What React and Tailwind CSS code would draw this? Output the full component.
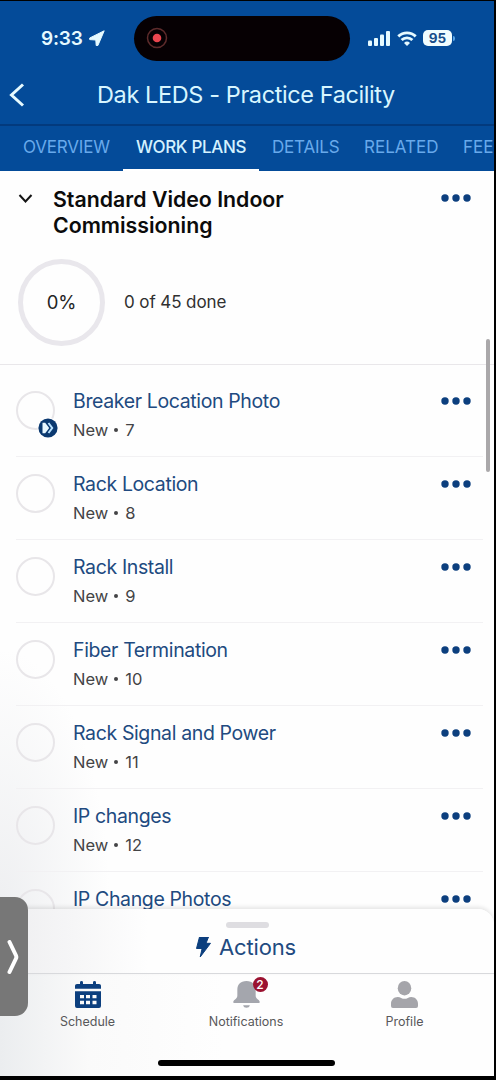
const tasks = [
  { name: 'Breaker Location Photo', number: 7, current: true },
  { name: 'Rack Location', number: 8 },
  { name: 'Rack Install', number: 9 },
  { name: 'Fiber Termination', number: 10 },
  { name: 'Rack Signal and Power', number: 11 },
  { name: 'IP changes', number: 12 },
  { name: 'IP Change Photos' },
];

function StatusBar() {
  return (
    <div className="flex h-[74px] items-center pl-[41px] text-[#e6faff]">
      <span className="w-[45px] pt-[2px] text-[19px] font-semibold tracking-[-0.200px] whitespace-nowrap">9:33</span>
      <svg className="ml-[3px] h-4 w-4" viewBox="0 0 16 16" fill="currentColor" stroke="currentColor" strokeWidth="1" strokeLinejoin="round">
        <path d="M15.200.8.700 8v1.600l6.100.4.400 5.500h1.700Z" />
      </svg>
      <div className="ml-[29px] flex h-[45px] w-[216px] items-center rounded-full bg-[#060003] pl-3">
        <svg className="h-[22px] w-[22px]" viewBox="0 0 22 22">
          <circle cx="11" cy="11" r="9.500" fill="none" stroke="#5e2b2c" strokeWidth="1.500" />
          <circle cx="11" cy="11" r="4.300" fill="#e9454f" />
        </svg>
      </div>
      <svg className="ml-[17px] h-[15px] w-6" viewBox="0 0 24 15" fill="currentColor">
        <rect x="1" y="9.500" width="4" height="5.500" rx="1" />
        <rect x="7" y="7" width="4" height="8" rx="1" />
        <rect x="13" y="3.500" width="4" height="11.500" rx="1" />
        <rect x="19" y="0" width="4" height="15" rx="1" />
      </svg>
      <svg className="ml-[6px] h-[15px] w-5" viewBox="0 0 20 15" fill="none" stroke="currentColor" strokeWidth="2.900">
        <path d="M1.300 5.400a12.500 12.500 0 0 1 17.400 0" />
        <path d="M4.600 9a7.800 7.800 0 0 1 10.800 0" />
        <path d="m10 15-3-3.100a4.500 4.500 0 0 1 6 0Z" fill="currentColor" stroke="none" />
      </svg>
      <div className="ml-[6px] flex h-4 w-[29px] items-center justify-center rounded-[5px] bg-[#f1fdff] text-[13.500px] font-bold text-[#174d8a]">95</div>
      <div className="ml-px h-[5px] w-[2px] rounded-r-full bg-[#56a4e8]" />
    </div>
  );
}

function Tabs() {
  return (
    <div className="flex h-[47px] items-center overflow-hidden border-t-2 border-[#033a7d] text-[17px] whitespace-nowrap text-[#68a9eb]">
      <div className="ml-[23px] w-[100px] shrink-0 pb-[2px] tracking-[-0.200px]">OVERVIEW</div>
      <div className="relative flex h-full w-[136px] shrink-0 items-center justify-center pb-[2px] font-medium tracking-[-0.350px] text-[#d4f2ff]">
        WORK PLANS
        <span className="absolute inset-x-0 bottom-0 h-[2px] bg-white" />
      </div>
      <div className="ml-[13px] w-[92px] shrink-0 pb-[2px] tracking-[-0.200px]">DETAILS</div>
      <div className="w-[99px] shrink-0 pb-[2px]">RELATED</div>
      <div className="shrink-0 pb-[2px]">FEE</div>
    </div>
  );
}

function MoreDots() {
  return (
    <svg className="h-2 w-[30px] shrink-0" viewBox="0 0 30 8" fill="#0c3f7e">
      <circle cx="4" cy="4" r="3.700" />
      <circle cx="15" cy="4" r="3.700" />
      <circle cx="26" cy="4" r="3.700" />
    </svg>
  );
}

function TaskRow({ task }) {
  return (
    <div className="ml-4 flex h-[83px] w-[467px] shrink-0 border-b border-[#f2f1f3]">
      <div className="w-[57px] shrink-0 pt-[17px]">
        <div className="relative h-[39px] w-[39px] rounded-full border-2 border-[#e8e6e9]">
          {task.current && (
            <svg className="absolute top-[24px] left-[19px] h-[22px] w-[22px]" viewBox="0 0 22 22">
              <circle cx="11" cy="11" r="10.500" fill="white" />
              <circle cx="11" cy="11" r="9.600" fill="#0b3970" />
              <path d="M5.500 5.700h2.700l4 5.300-4 5.300H5.500Z" fill="#e8f8ff" />
              <path d="m11.500 6 3.700 5-3.700 5" fill="none" stroke="#b9e2ff" strokeWidth="2" />
            </svg>
          )}
        </div>
      </div>
      <div className="flex flex-1 flex-col pt-[13px]">
        <div className="flex h-[28px] items-center justify-between pr-[12px]">
          <span className="pt-[2px] text-[19.500px] tracking-[-0.370px] whitespace-nowrap text-[#214a80]">{task.name}</span>
          <MoreDots />
        </div>
        {task.number && (
          <div className="flex h-[30px] items-center text-[16.500px] text-[#444446]">
            <span>New</span>
            <span className="ml-[6px] h-1 w-1 rounded-full bg-[#444446]" />
            <span className="ml-[7px]">{task.number}</span>
          </div>
        )}
      </div>
    </div>
  );
}

export default function App() {
  return (
    <div className="h-[1080px] w-[496px] overflow-hidden bg-black pt-px font-['Inter','Liberation_Sans',sans-serif]">
      <div className="relative flex h-[1075px] w-[494px] flex-col overflow-hidden bg-[#fefefe]">
        <header className="h-[170px] shrink-0 bg-[#044b99]">
          <StatusBar />
          <div className="relative flex h-[49px] items-center justify-center pb-[9px]">
            <svg className="absolute top-[8px] left-2 h-6 w-[18px]" viewBox="0 0 18 24" fill="none" stroke="#e6faff" strokeWidth="3">
              <path d="M15 1.500 3.500 12 15 22.500" />
            </svg>
            <h1 className="ml-[-2px] text-[23.500px] tracking-[-0.400px] whitespace-nowrap text-[#d8f6ff]">Dak LEDS - Practice Facility</h1>
          </div>
          <Tabs />
        </header>

        <section className="h-[194px] shrink-0 border-b border-[#e9e7ea]">
          <div className="flex pt-[15px] pr-[23px]">
            <svg className="mt-2 ml-[18px] h-[10px] w-[15px]" viewBox="0 0 15 10" fill="none" stroke="#151515" strokeWidth="2">
              <path d="m1.500 1 6 6.500 6-6.500" />
            </svg>
            <h2 className="ml-5 flex-1 text-[21.300px] leading-[26px] font-semibold text-[#0b0b0b]">Standard Video Indoor<br />Commissioning</h2>
            <div className="flex h-[24px] items-center"><MoreDots /></div>
          </div>
          <div className="mt-[21px] ml-[18px] flex items-center">
            <div className="flex h-[87px] w-[87px] items-center justify-center rounded-full border-[5px] border-[#e9e7ec] text-[18.500px] tracking-[-0.200px] text-[#242424]">0%</div>
            <span className="ml-[19px] text-[17px] tracking-[-0.100px] text-[#303030]">0 of 45 done</span>
          </div>
        </section>

        <main className="flex h-[544px] shrink-0 flex-col overflow-hidden bg-[radial-gradient(ellipse_110px_260px_at_0%_100%,#eeeff1,#fefefe)] pt-[9px]">
          {tasks.map((task) => <TaskRow key={task.name} task={task} />)}
        </main>

        <div className="relative flex h-[65px] shrink-0 flex-col items-center rounded-tr-[16px] border-b border-[#d8d9dc] bg-linear-to-r from-[#eeeef0] to-[#fefefe] to-30% shadow-[0_-2px_4px_rgba(0,0,0,0.1)]">
          <div className="mt-[13px] h-[6px] w-[43px] shrink-0 rounded-full bg-[#dedde1]" />
          <div className="mt-1 mr-[2px] flex h-[30px] items-center gap-[8px] text-[22px] tracking-[-0.150px] text-[#214a80]">
            <svg className="h-5 w-[15px]" viewBox="0 0 15 20" fill="#0c3f7e">
              <path d="M3.500 0h9L10 6.300h4.500L4.200 20l1.900-8.500H.500Z" stroke="#0c3f7e" strokeLinejoin="round" />
            </svg>
            <span>Actions</span>
          </div>
        </div>

        <nav className="flex flex-1 bg-linear-to-r from-[#ebedef] via-[#fafafa] via-18% to-[#fefefe] to-45% pl-2 text-[12.500px] text-[#58585a]">
          <div className="flex w-[159px] flex-col items-center pt-[7px]">
            <svg className="h-[27px] w-[26px]" viewBox="0 0 26 28" preserveAspectRatio="none" fill="#0c3f7e">
              <path d="M2 3h3V1.500a1.500 1.500 0 0 1 3 0V3h10V1.500a1.500 1.500 0 0 1 3 0V3h3q2 0 2 2v3H0V5q0-2 2-2Z" />
              <path fillRule="evenodd" d="M0 10.500h26V26q0 2-2 2H2q-2 0-2-2Zm5 4V18h4v-3.500Zm6 0V18h4v-3.500Zm6.500 0V18h4v-3.500ZM5 20.500V24h4v-3.500Zm6 0V24h4v-3.500Zm6.500 0V24h4v-3.500Z" />
            </svg>
            <span className="mt-[5px]">Schedule</span>
          </div>
          <div className="flex w-[158px] flex-col items-center pt-[7px]">
            <div className="relative">
              <svg className="h-[27px] w-[27px]" viewBox="0 0 28 28" fill="#a4a6ad">
                <path d="M14 0C7.500 0 4.500 4 4.500 9v6c0 2-.8 3-2.700 4.500C-.2 21-.2 22.800 1.500 22.800h25c1.700 0 1.700-1.800-.3-3.300-1.900-1.500-2.700-2.500-2.700-4.500V9c0-5-3-9-9.500-9ZM10.500 25.200h7c-.5 3.500-6.500 3.500-7 0Z" />
              </svg>
              <span className="absolute top-[-4px] left-[20px] flex h-[15px] w-[15px] items-center justify-center rounded-full bg-[#9b1230] text-[12px] font-medium text-white">2</span>
            </div>
            <span className="mt-[5px]">Notifications</span>
          </div>
          <div className="flex w-[159px] flex-col items-center pt-[7px]">
            <svg className="h-[27px] w-[27px]" viewBox="0 0 28 28" fill="#a5a5aa">
              <ellipse cx="14" cy="7.500" rx="7" ry="7.500" />
              <path d="M7 16.500q2 0 3.500 1 3.500 1.800 7 0 1.500-1 3.500-1c4 0 7 3 7 7V26q0 2-2 2H2q-2 0-2-2v-2.500c0-4 3-7 7-7Z" />
            </svg>
            <span className="mt-[5px]">Profile</span>
          </div>
        </nav>

        <div className="absolute top-[338px] left-[486px] h-[133px] w-1 rounded-full bg-[#aaa8aa]" />
        <div className="absolute top-[896px] left-0 flex h-[119px] w-7 items-center rounded-r-[13px] bg-[#777777] pl-[7px]">
          <svg className="h-[34px] w-[12px]" viewBox="0 0 12 34" fill="none" stroke="white" strokeWidth="4" strokeLinecap="round" strokeLinejoin="round">
            <path d="m2.500 2 6.500 13.500q.7 1.500 0 3L2.500 32" />
          </svg>
        </div>
        <div className="absolute top-[1059px] left-[158px] h-[6px] w-[177px] rounded-full bg-black" />
      </div>
    </div>
  );
}
